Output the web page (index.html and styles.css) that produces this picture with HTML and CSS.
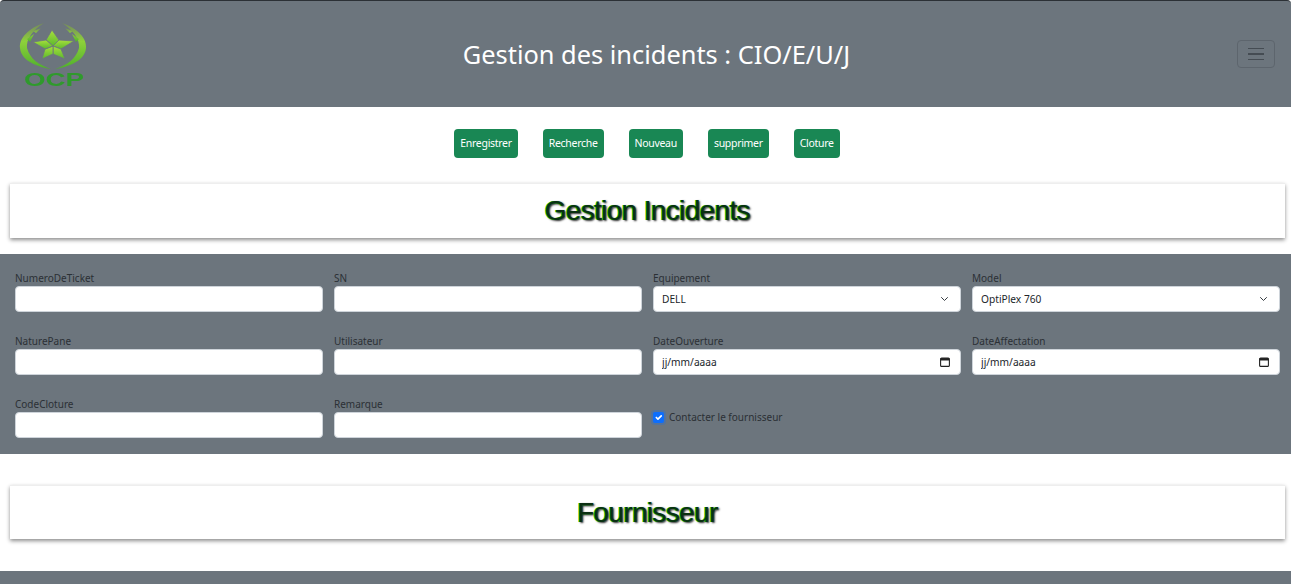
FILE: index.html
```html
<!DOCTYPE html>
<html lang="fr">
<head>
    <meta charset="UTF-8">
    <meta name="viewport" content="width=device-width, initial-scale=1.0">
    <title>Gestion des incidents</title>
    <link rel="stylesheet" href="styles.css">
</head>
<body>
    <nav class="topbar">
        <svg class="logo" width="70" height="70" viewBox="0 0 70 70" aria-label="OCP">
            <defs>
                <linearGradient id="leaf" x1="0" y1="0" x2="0" y2="1">
                    <stop offset="0" stop-color="#74885f"/>
                    <stop offset="0.4" stop-color="#8ed13a"/>
                    <stop offset="1" stop-color="#4fb02c"/>
                </linearGradient>
                <linearGradient id="starfill" x1="0" y1="0" x2="0" y2="1">
                    <stop offset="0" stop-color="#a8e03c"/>
                    <stop offset="1" stop-color="#5cb82e"/>
                </linearGradient>
            </defs>
            <!-- wreath, left then right -->
            <g fill="url(#leaf)">
                <path d="M26 4 C11 9 1 19 2 29 C3 40 15 47 33 50 C21 46 12 40 9 29 C8 20 15 11 26 4Z"/>
                <path d="M9 20 L16 15 L12 23 Z M15 12 L23 9 L18 14 Z"/>
                <path d="M44 4 C59 9 69 19 68 29 C67 40 55 47 37 50 C49 46 58 40 61 29 C62 20 55 11 44 4Z"/>
                <path d="M61 20 L54 15 L58 23 Z M55 12 L47 9 L52 14 Z"/>
            </g>
            <!-- star -->
            <g fill="url(#starfill)" stroke="#6c757d" stroke-width="0.8">
                <path d="M34 11 L41 21 L35 27 L28 21 Z"/>
                <path d="M56 22 L43 30 L35 27 L41 21 Z"/>
                <path d="M47 40 L35 35 L35 27 L43 30 Z"/>
                <path d="M24 40 L27 30 L35 27 L35 35 Z"/>
                <path d="M15 23 L28 21 L35 27 L27 30 Z"/>
            </g>
            <text x="36" y="67" text-anchor="middle" textLength="60" lengthAdjust="spacingAndGlyphs" class="logo-text">OCP</text>
        </svg>
        <h1 class="page-title">Gestion des incidents : CIO/E/U/J</h1>
        <button class="toggler" type="button" aria-label="Menu"><span></span><span></span><span></span></button>
    </nav>

    <div class="actions">
        <button class="btn" type="button">Enregistrer</button>
        <button class="btn" type="button">Recherche</button>
        <button class="btn" type="button">Nouveau</button>
        <button class="btn" type="button">supprimer</button>
        <button class="btn" type="button">Cloture</button>
    </div>

    <div class="card"><h2>Gestion Incidents</h2></div>

    <form class="panel">
        <div class="field">
            <label>NumeroDeTicket</label>
            <input type="text">
        </div>
        <div class="field">
            <label>SN</label>
            <input type="text">
        </div>
        <div class="field">
            <label>Equipement</label>
            <select><option>DELL</option></select>
        </div>
        <div class="field">
            <label>Model</label>
            <select><option>OptiPlex 760</option></select>
        </div>
        <div class="field">
            <label>NaturePane</label>
            <input type="text">
        </div>
        <div class="field">
            <label>Utilisateur</label>
            <input type="text">
        </div>
        <div class="field">
            <label>DateOuverture</label>
            <input class="date" type="text" placeholder="jj/mm/aaaa">
        </div>
        <div class="field">
            <label>DateAffectation</label>
            <input class="date" type="text" placeholder="jj/mm/aaaa">
        </div>
        <div class="field">
            <label>CodeCloture</label>
            <input type="text">
        </div>
        <div class="field">
            <label>Remarque</label>
            <input type="text">
        </div>
        <label class="check">
            <input type="checkbox" checked>
            Contacter le fournisseur
        </label>
    </form>

    <div class="card card-second"><h2>Fournisseur</h2></div>

    <div class="panel-bottom"></div>
</body>
</html>
```

FILE: styles.css
```css
html, body {
    height: 584px;
    overflow: hidden;
}
body {
    margin: 0;
    font-family: "Noto Sans", "Open Sans", sans-serif;
    background-color: #fff;
    color: #212529;
}
.topbar {
    display: flex;
    align-items: center;
    justify-content: space-between;
    height: 106px;
    padding: 0 16px 0 18px;
    background-color: #6c757d;
    border-top: 1px solid #2b3035;
    border-radius: 4px 4px 0 0;
}
.logo {
    flex: none;
    overflow: visible;
    filter: blur(0.5px);
}
.logo-text {
    font-family: "Liberation Sans", sans-serif;
    font-size: 18px;
    font-weight: bold;
    fill: #2f9a2c;
}
.page-title {
    margin: 0 0 0 -12px;
    font-size: 25.4px;
    font-weight: 400;
    color: #fff;
}
.toggler {
    display: flex;
    flex-direction: column;
    justify-content: center;
    gap: 4px;
    align-items: center;
    width: 38px;
    height: 28px;
    padding: 0;
    background: transparent;
    border: 1px solid #5d656d;
    border-radius: 4px;
}
.toggler span {
    display: block;
    width: 16px;
    height: 1.5px;
    background-color: #454c53;
}
.actions {
    display: flex;
    justify-content: center;
    gap: 25px;
    padding: 22px 0 25px 3px;
}
.btn {
    height: 29px;
    padding: 0 6px 2px;
    font-family: inherit;
    font-size: 10.5px;
    letter-spacing: -0.3px;
    color: #fff;
    background-color: #198754;
    border: none;
    border-radius: 4px;
}
.card {
    display: flex;
    align-items: center;
    justify-content: center;
    height: 55px;
    margin: 0 6px 16px 10px;
    background-color: #fff;
    border-top: 1px solid #eee;
    box-shadow: 0 2px 4px rgba(0, 0, 0, 0.45);
    box-sizing: border-box;
}
.card h2 {
    margin: 0;
    font-family: "Liberation Sans", Arial, sans-serif;
    font-size: 28px;
    font-weight: 400;
    color: #0b2f12;
    letter-spacing: -0.65px;
    text-shadow: -1px 0 0 #0b0, 1px 1px 2px #222;
}
.card-second {
    height: 54px;
    margin-top: 31px;
    margin-bottom: 32px;
}
.panel {
    display: grid;
    grid-template-columns: repeat(4, 308px);
    column-gap: 11px;
    row-gap: 21px;
    padding: 16px 11px 16px 15px;
    background-color: #6c757d;
}
.field label {
    display: block;
    height: 16px;
    font-size: 10px;
    line-height: 16px;
    color: #2b3035;
}
.field input,
.field select {
    display: block;
    box-sizing: border-box;
    width: 100%;
    height: 26px;
    padding: 0 8px;
    font-family: inherit;
    font-size: 10.2px;
    color: #212529;
    background-color: #fff;
    border: 1px solid #ced4da;
    border-radius: 4px;
}
.field input::placeholder {
    color: #212529;
    opacity: 1;
}
.field select {
    appearance: none;
    padding-right: 28px;
    background-image: url("data:image/svg+xml,%3csvg xmlns='http://www.w3.org/2000/svg' viewBox='0 0 16 16'%3e%3cpath fill='none' stroke='%23343a40' stroke-linecap='round' stroke-linejoin='round' stroke-width='2' d='m2 5 6 6 6-6'/%3e%3c/svg%3e");
    background-repeat: no-repeat;
    background-position: right 11px center;
    background-size: 9px 8px;
}
.field .date {
    background-image: url("data:image/svg+xml,%3csvg xmlns='http://www.w3.org/2000/svg' viewBox='0 0 10 10'%3e%3crect x='.6' y='1.1' width='8.8' height='8.3' rx='1' fill='none' stroke='%23222' stroke-width='1.1'/%3e%3crect x='.6' y='1.1' width='8.8' height='2.4' fill='%23222'/%3e%3c/svg%3e");
    background-repeat: no-repeat;
    background-position: right 10px center;
    background-size: 10px 10px;
}
.check {
    display: flex;
    align-items: center;
    align-self: center;
    gap: 5px;
    font-size: 10px;
    color: #2b3035;
}
.check input {
    appearance: none;
    width: 11px;
    height: 11px;
    margin: 0;
    border-radius: 2px;
    background-color: #0d6efd;
    background-image: url("data:image/svg+xml,%3csvg xmlns='http://www.w3.org/2000/svg' viewBox='0 0 20 20'%3e%3cpath fill='none' stroke='%23fff' stroke-linecap='round' stroke-linejoin='round' stroke-width='3' d='m6 10 3 3 6-6'/%3e%3c/svg%3e");
    box-shadow: 0 0 0 2px rgba(13, 110, 253, 0.25);
}
.panel-bottom {
    height: 13px;
    background-color: #6c757d;
}
```
